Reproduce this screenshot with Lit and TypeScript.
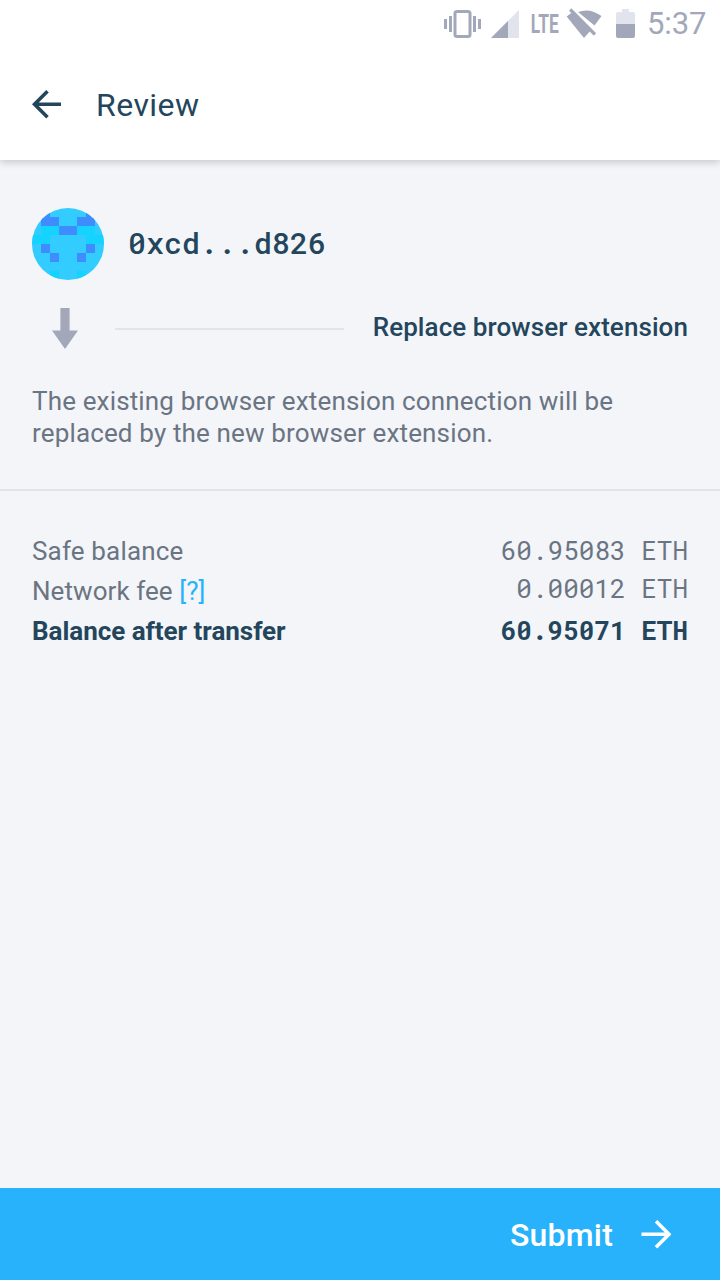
import { LitElement, html, css, svg } from "lit";
import { customElement } from "lit/decorators.js";

const INK = "#a2a8ba";

@customElement("identicon-view")
class IdenticonView extends LitElement {
  static styles = css`
    :host { display: block; width: 72px; height: 72px; border-radius: 50%; overflow: hidden; background: #32ccff; }
    svg { display: block; }
  `;
  rows = [".b....b.", ".bb..bb.", ".ccbbcc.", "cc....cc", ".b....b.", "..b..b..", "........", "..c..c.."];
  render() {
    return html`<svg width="72" height="72" shape-rendering="crispEdges">
      ${this.rows.map((r, y) =>
        [...r].map((c, x) =>
          c === "." ? null : svg`<rect x=${x * 9} y=${y * 9} width="9" height="9" fill=${c === "b" ? "#3f8cff" : "#14d3ff"} />`
        )
      )}
    </svg>`;
  }
}

@customElement("app-root")
class AppRoot extends LitElement {
  static styles = css`
    :host { display: flex; flex-direction: column; height: 1280px; width: 720px; background: #f3f5f9; font-family: Roboto, sans-serif; color: #24465d; overflow: hidden; }
    svg { display: block; flex: none; }
    .mono { font-family: "Roboto Mono", "Liberation Mono", monospace; white-space: pre; }
    .top { background: #fff; height: 160px; flex: none; box-shadow: 0 2px 8px rgba(0, 0, 0, 0.2); }
    .status { height: 48px; display: flex; justify-content: flex-end; padding-right: 15px; box-sizing: border-box; color: #a2a8ba; }
    .clock { font-size: 31px; line-height: 48px; width: 58px; margin-left: 11px; white-space: nowrap; letter-spacing: -0.1px; }
    .status svg { margin-right: 0; }
    .bar { height: 112px; display: flex; align-items: center; padding-left: 32px; gap: 34px; }
    .title { font-size: 32px; line-height: 40px; padding-top: 2px; letter-spacing: 0.45px; }
    .account { display: flex; align-items: center; gap: 24px; padding: 48px 32px 0; }
    .address { font-size: 30px; font-weight: 500; line-height: 40px; padding-bottom: 2px; }
    .action { display: flex; align-items: center; padding: 28px 32px 0 52px; height: 41px; }
    .rule { height: 2px; width: 229px; background: #e2e4ea; margin-left: 37px; }
    .name { margin-left: auto; font-size: 26px; font-weight: 500; line-height: 32px; margin-top: -3px; white-space: nowrap; letter-spacing: 0.08px; }
    .info { margin: 36px 32px 0; font-size: 26px; line-height: 32px; color: #6a7482; white-space: nowrap; height: 104px; letter-spacing: 0.15px; }
    .split { height: 2px; background: #e2e4ea; flex: none; }
    .costs { padding: 40px 32px 0; font-size: 26px; line-height: 40px; color: #6a7482; flex: 1; }
    .row { display: flex; justify-content: space-between; height: 40px; white-space: nowrap; }
    .row .label { letter-spacing: 0.16px; }
    .row .mono { margin-top: -1px; }
    .fee .label { letter-spacing: 0.07px; }
    .fee .mono { margin-top: -3px; }
    .total { color: #24465d; font-weight: 700; }
    .total .label { letter-spacing: -0.03px; }
    .help { color: #28b2fc; }
    .submit { height: 92px; flex: none; background: #28b2fc; color: #fff; display: flex; align-items: center; justify-content: flex-end; gap: 28px; padding-right: 49px; font-size: 32px; font-weight: 500; letter-spacing: 0.2px; }
    .submit span { padding-top: 1px; }
  `;
  render() {
    return html`
      <header class="top">
        <div class="status">
          <svg width="196" height="48" viewBox="440 0 196 48" fill=${INK}>
            <path d="M444 19h3v10h-3zM449 16h3v16h-3zM473 16h3v16h-3zM478 19h3v10h-3z" />
            <rect x="455" y="11.5" width="15" height="25" rx="2" fill="none" stroke=${INK} stroke-width="3" />
            <path d="M519 10V38H491z" fill="#e1e4ed" />
            <path d="M508 21V38H491z" />
            <text x="530.8" y="33" font-size="25" font-weight="700" textLength="28" lengthAdjust="spacingAndGlyphs">LTE</text>
            <path d="M572 12.5L566.7 16.5L584 38L591 30zM578 12Q590 7.5 601.5 16L594.5 25.5z" />
            <path d="M570.2 9.5L595 34.5" stroke=${INK} stroke-width="3.2" />
            <path d="M622 9h7v3h4q2 0 2 2v10h-19V14q0-2 2-2h4z" fill="#e1e4ed" />
            <path d="M616 24h19v12q0 2-2 2h-15q-2 0-2-2z" />
          </svg>
          <span class="clock">5:37</span>
        </div>
        <div class="bar">
          <svg width="30" height="30" fill="none" stroke="#24465d" stroke-width="3.6"><path d="M29 15.3H3M15.5 2.3L2.5 15.3L15.5 28.3" /></svg>
          <span class="title">Review</span>
        </div>
      </header>
      <section class="account">
        <identicon-view></identicon-view>
        <span class="mono address">0xcd...d826</span>
      </section>
      <section class="action">
        <svg width="26" height="41" fill=${INK}><path d="M8.4 0h9.2v22.5H26L13 41L0 22.5h8.4z" /></svg>
        <div class="rule"></div>
        <span class="name">Replace browser extension</span>
      </section>
      <div class="info">The existing browser extension connection will be<br />replaced by the new browser extension.</div>
      <div class="split"></div>
      <section class="costs">
        <div class="row"><span class="label">Safe balance</span><span class="mono">60.95083 ETH</span></div>
        <div class="row fee"><span class="label">Network fee <span class="help">[?]</span></span><span class="mono">0.00012 ETH</span></div>
        <div class="row total"><span class="label">Balance after transfer</span><span class="mono">60.95071 ETH</span></div>
      </section>
      <footer class="submit">
        <span>Submit</span>
        <svg width="30" height="30" fill="none" stroke="#fff" stroke-width="3.6"><path d="M0.5 15.3H27.5M15 2.3L28 15.3L15 28.3" /></svg>
      </footer>
    `;
  }
}
